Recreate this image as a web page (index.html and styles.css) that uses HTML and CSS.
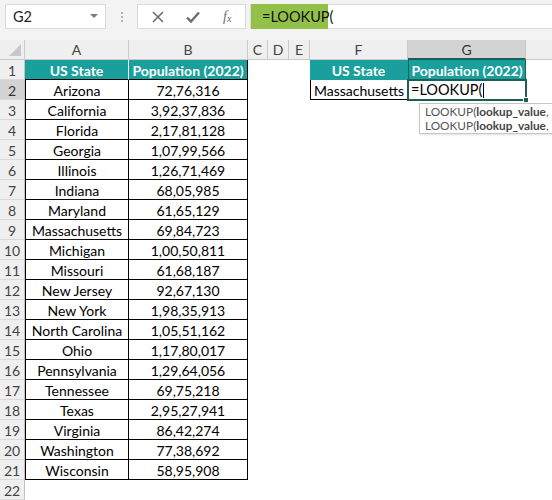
FILE: index.html
```html
<!DOCTYPE html>
<html>
<head>
<meta charset="utf-8">
<link rel="stylesheet" href="styles.css">
</head>
<body>
<div class="app">
  <div class="fbar">
    <div class="namebox"><span class="nb-text">G2</span><span class="nb-arrow"></span></div>
    <div class="dots"><span></span><span></span><span></span></div>
    <div class="btns">
      <svg class="ico" width="14" height="14" viewBox="0 0 14 14"><path d="M2 2 L12 12 M12 2 L2 12" stroke="#6d6d6d" stroke-width="1.6" fill="none"/></svg>
      <svg class="ico" width="16" height="14" viewBox="0 0 16 14"><path d="M2 7.5 L6 11.5 L14 2.5" stroke="#6d6d6d" stroke-width="2.4" fill="none"/></svg>
      <span class="fx">f<sub>x</sub></span>
    </div>
    <div class="finput"><span class="fhl">=LOOKUP(</span></div>
  </div>

  <div class="sheet">
    <div class="row hdr">
      <div class="corner"><span class="tri"></span></div>
      <div class="ch ca">A</div><div class="ch cb">B</div><div class="ch cc">C</div><div class="ch cd">D</div><div class="ch ce">E</div><div class="ch cf">F</div><div class="ch cg selh">G</div><div class="ch chh"></div>
    </div>
    <div class="row">
      <div class="rh">1</div>
      <div class="ca t th first">US State</div><div class="cb t th last">Population (2022)</div>
      <div class="cc"></div><div class="cd"></div><div class="ce"></div>
      <div class="cf th">US State</div><div class="cg th g1">Population (2022)</div>
    </div>
    <div class="row">
      <div class="rh selr">2</div>
      <div class="ca t first">Arizona</div><div class="cb t">72,76,316</div>
      <div class="cc"></div><div class="cd"></div><div class="ce"></div>
      <div class="cf t first">Massachusetts</div><div class="cg active"><span class="edit">=LOOKUP(</span><span class="caret"></span></div>
    </div>
    <div class="row"><div class="rh">3</div><div class="ca t first">California</div><div class="cb t">3,92,37,836</div></div>
    <div class="row"><div class="rh">4</div><div class="ca t first">Florida</div><div class="cb t">2,17,81,128</div></div>
    <div class="row"><div class="rh">5</div><div class="ca t first">Georgia</div><div class="cb t">1,07,99,566</div></div>
    <div class="row"><div class="rh">6</div><div class="ca t first">Illinois</div><div class="cb t">1,26,71,469</div></div>
    <div class="row"><div class="rh">7</div><div class="ca t first">Indiana</div><div class="cb t">68,05,985</div></div>
    <div class="row"><div class="rh">8</div><div class="ca t first">Maryland</div><div class="cb t">61,65,129</div></div>
    <div class="row"><div class="rh">9</div><div class="ca t first">Massachusetts</div><div class="cb t">69,84,723</div></div>
    <div class="row"><div class="rh">10</div><div class="ca t first">Michigan</div><div class="cb t">1,00,50,811</div></div>
    <div class="row"><div class="rh">11</div><div class="ca t first">Missouri</div><div class="cb t">61,68,187</div></div>
    <div class="row"><div class="rh">12</div><div class="ca t first">New Jersey</div><div class="cb t">92,67,130</div></div>
    <div class="row"><div class="rh">13</div><div class="ca t first">New York</div><div class="cb t">1,98,35,913</div></div>
    <div class="row"><div class="rh">14</div><div class="ca t first">North Carolina</div><div class="cb t">1,05,51,162</div></div>
    <div class="row"><div class="rh">15</div><div class="ca t first">Ohio</div><div class="cb t">1,17,80,017</div></div>
    <div class="row"><div class="rh">16</div><div class="ca t first">Pennsylvania</div><div class="cb t">1,29,64,056</div></div>
    <div class="row"><div class="rh">17</div><div class="ca t first">Tennessee</div><div class="cb t">69,75,218</div></div>
    <div class="row"><div class="rh">18</div><div class="ca t first">Texas</div><div class="cb t">2,95,27,941</div></div>
    <div class="row"><div class="rh">19</div><div class="ca t first">Virginia</div><div class="cb t">86,42,274</div></div>
    <div class="row"><div class="rh">20</div><div class="ca t first">Washington</div><div class="cb t">77,38,692</div></div>
    <div class="row"><div class="rh">21</div><div class="ca t first">Wisconsin</div><div class="cb t">58,95,908</div></div>
    <div class="row"><div class="rh">22</div></div>
  </div>

  <div class="tooltip">
    <div>LOOKUP(<b>lookup_value</b>,</div>
    <div>LOOKUP(<b>lookup_value</b>,</div>
  </div>
</div>
</body>
</html>
```

FILE: styles.css
```css
html, body {
  margin: 0;
  padding: 0;
  background: #ffffff;
}
body {
  width: 552px;
  height: 500px;
  overflow: hidden;
  font-family: Lato, "Liberation Sans", sans-serif;
}
.app {
  position: relative;
  width: 552px;
  height: 500px;
  overflow: hidden;
}

/* formula bar */
.fbar {
  height: 40px;
  box-sizing: border-box;
  background: #f3f3f3;
  display: flex;
  align-items: flex-start;
  padding: 4px 0 0 5px;
}
.namebox {
  width: 101px;
  height: 25px;
  box-sizing: border-box;
  background: #fff;
  border: 1px solid #dadada;
  display: flex;
  align-items: center;
  justify-content: space-between;
  padding: 0 7px 0 7px;
}
.nb-text {
  font-size: 14.5px;
  color: #222;
}
.nb-arrow {
  width: 0;
  height: 0;
  border-left: 4px solid transparent;
  border-right: 4px solid transparent;
  border-top: 4px solid #7a7a7a;
  margin-top: -2px;
}
.dots {
  width: 31px;
  height: 25px;
  display: flex;
  flex-direction: column;
  align-items: center;
  justify-content: center;
  gap: 2px;
}
.dots span {
  width: 2px;
  height: 2px;
  background: #b4b4b4;
}
.btns {
  width: 109px;
  height: 25px;
  box-sizing: border-box;
  background: #fff;
  border: 1px solid #dadada;
  display: flex;
  align-items: center;
  padding: 0 0 0 13px;
  gap: 20px;
}
.ico {
  display: block;
}
.fx {
  font-family: "Liberation Serif", serif;
  font-style: italic;
  font-size: 14px;
  color: #707070;
  margin-left: 2px;
}
.fx sub {
  font-size: 10px;
  vertical-align: -1px;
}
.finput {
  margin-left: 4px;
  flex: 1;
  height: 25px;
  box-sizing: border-box;
  background: #fff;
  border: 1px solid #dadada;
  border-right: none;
  display: flex;
}
.fhl {
  background: #92c048;
  width: 77px;
  box-sizing: border-box;
  padding-left: 11px;
  font-size: 14.5px;
  color: #111;
  margin: -1px 0;
  height: 25px;
  line-height: 25px;
}

/* sheet */
.sheet {
  display: flex;
  flex-direction: column;
}
.row {
  display: flex;
  height: 20px;
}
.row > div {
  box-sizing: border-box;
  height: 20px;
  flex: none;
  font-size: 14px;
  line-height: 21px;
  text-align: center;
  white-space: nowrap;
  overflow: visible;
}
.ca { width: 104px; }
.cb { width: 119px; }
.cc { width: 20px; }
.cd { width: 21px; }
.ce { width: 21px; }
.cf { width: 98px; }
.cg { width: 118px; }
.chh { width: 26px; }

.hdr > div {
  background: #efefef;
  color: #444;
  border-right: 1px solid #c9c9c9;
  border-bottom: 1px solid #c9c9c9;
  line-height: 20px;
}
.hdr .chh {
  border-right: none;
  flex: 1;
}
.corner {
  width: 25px;
  position: relative;
}
.tri {
  position: absolute;
  right: 3px;
  bottom: 3px;
  width: 0;
  height: 0;
  border-left: 12px solid transparent;
  border-bottom: 12px solid #c8c8c8;
}
.hdr .selh {
  background: #d3d3d3;
  border-bottom: 2px solid #1d5e57;
  color: #333;
}
.rh {
  width: 25px;
  background: #efefef;
  color: #444;
  border-right: 1px solid #c2c2c2;
  border-bottom: 1px solid #dadada;
}
.rh.selr {
  background: #d3d3d3;
  color: #333;
}

.t {
  border-right: 1px solid #000;
  border-bottom: 1px solid #000;
  color: #000;
}
.t.first {
  border-left: 1px solid #000;
}
.th {
  background: #19a09c;
  color: #fff;
  font-weight: 700;
}
.ca.th {
  border-right: 1px solid #ffffff;
  border-left: none;
}
.cb.th {
  border-right: 1px solid #000;
}
.cf.th {
  border-right: 1px solid #19a09c;
}
.g1 {
  border-left: 1px solid #1d5e57;
  border-right: 1px solid #1d5e57;
}

.active {
  position: relative;
  text-align: left !important;
  padding-left: 3px;
  display: flex;
  align-items: center;
}
.active::after {
  content: "";
  position: absolute;
  left: -1px;
  top: -1px;
  right: -1px;
  bottom: -1px;
  border: 2px solid #1d5e57;
}
.active::before {
  content: "";
  position: absolute;
  right: -3px;
  bottom: -3px;
  width: 4px;
  height: 4px;
  background: #1d5e57;
  border: 1px solid #fff;
  z-index: 2;
}
.edit {
  color: #000;
  line-height: 20px;
  font-size: 14.5px;
}
.caret {
  width: 1px;
  height: 15px;
  background: #000;
  margin-left: 1px;
}

/* tooltip */
.tooltip {
  position: absolute;
  left: 419px;
  top: 103px;
  width: 300px;
  height: 31px;
  box-sizing: border-box;
  background: #fff;
  border: 1px solid #c6c6c6;
  padding: 1px 0 0 5px;
  font-family: Lato, "Liberation Sans", sans-serif;
  font-size: 11.8px;
  line-height: 14px;
  color: #555;
  white-space: nowrap;
  box-shadow: 1px 1px 2px rgba(0,0,0,0.12);
}
.tooltip b {
  color: #444;
  font-weight: 700;
}
```
